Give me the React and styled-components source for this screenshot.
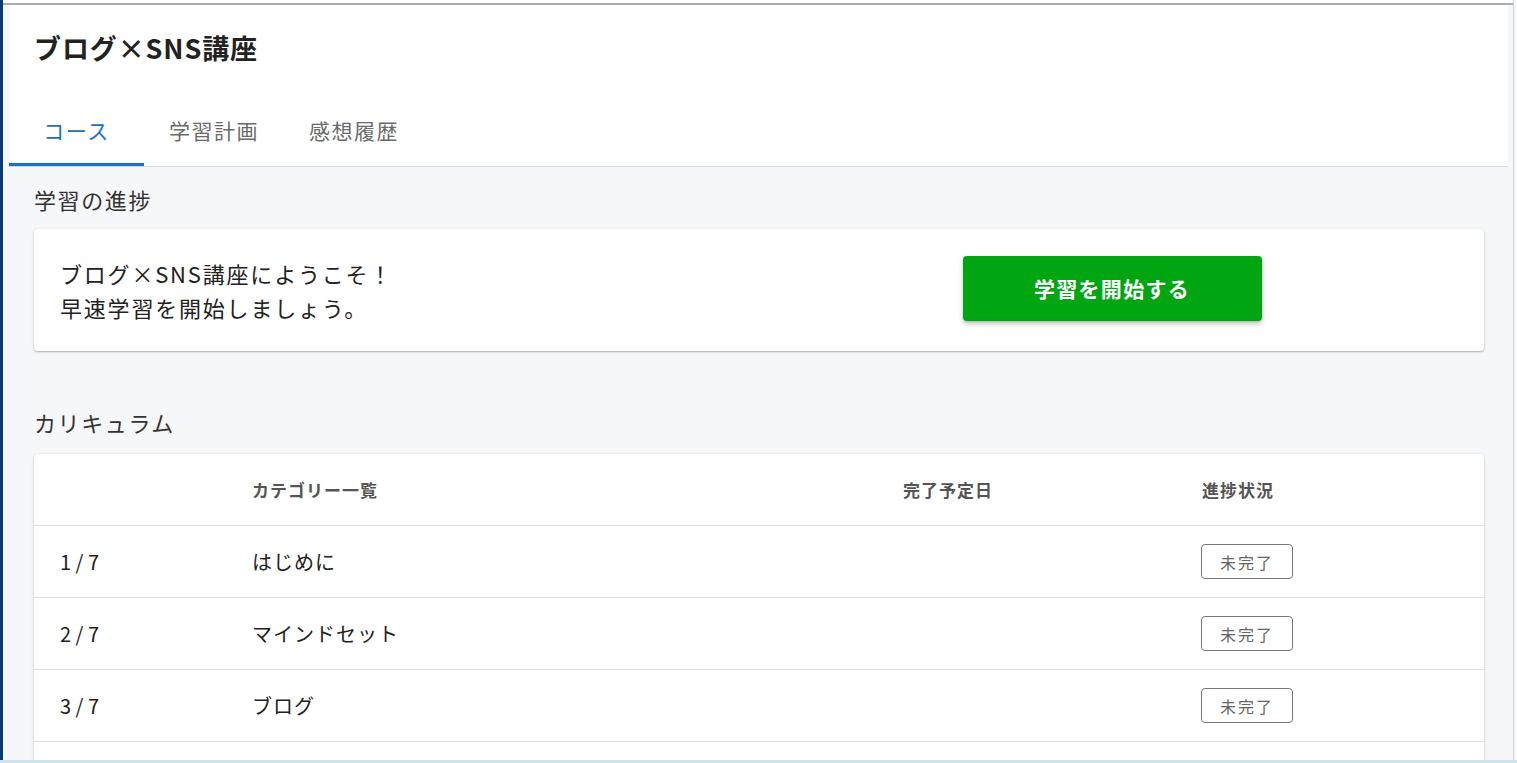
import React from "react";
import styled, { createGlobalStyle } from "styled-components";

const Global = createGlobalStyle`
  html, body { margin: 0; padding: 0; height: 100%; overflow: hidden; }
  body {
    background: #f6f7f9;
    font-family: "Noto Sans CJK JP", "Noto Sans", sans-serif;
    color: #222;
  }
  * { box-sizing: border-box; }
`;

const Shell = styled.div`
  display: flex;
  height: 100vh;
  overflow: hidden;
  background: #f6f7f9;
`;

const SideBar = styled.div`
  width: 3px;
  flex: none;
  background: #0b3b78;
`;

const Main = styled.div`
  flex: 1;
  min-width: 0;
  display: flex;
  flex-direction: column;
`;

const TopStrip = styled.div`
  height: 5px;
  flex: none;
  background: #fff;
  border-bottom: 2px solid #adadad;
`;

const RightRail = styled.div`
  width: 4px;
  flex: none;
  background: #f6f7f9;
  border-left: 1px solid #cfcfcf;
`;

const HeaderPanel = styled.header`
  margin: 0 5px 0 6px;
  background: #fff;
  border-bottom: 1px solid #d6d6d6;
`;

const Title = styled.h1`
  margin: 0;
  padding: 23px 25px 29px;
  font-size: 27px;
  line-height: 40px;
  font-weight: 700;
  letter-spacing: 0.9px;
  color: #222;
`;

const Tabs = styled.nav`
  display: flex;
`;

const Tab = styled.div`
  min-width: 135px;
  height: 69px;
  padding: 0 25px;
  display: flex;
  align-items: center;
  justify-content: center;
  font-size: 21px;
  letter-spacing: 1.5px;
  color: ${(p) => (p.$active ? "#1e6fc8" : "#6a6a6a")};
  border-bottom: 3px solid ${(p) => (p.$active ? "#1e6fc8" : "transparent")};
`;

const Content = styled.main`
  padding: 0 29px 0 31px;
`;

const SectionTitle = styled.h2`
  margin: ${(p) => p.$top}px 0 ${(p) => p.$bottom}px;
  font-size: 22px;
  line-height: 30px;
  font-weight: 400;
  letter-spacing: 1.6px;
  color: #333;
`;

const Card = styled.section`
  background: #fff;
  border-radius: 4px;
  box-shadow: 0 1px 3px rgba(0, 0, 0, 0.22), 0 1px 1px rgba(0, 0, 0, 0.1);
`;

const WelcomeCard = styled(Card)`
  min-height: 122px;
  display: grid;
  grid-template-columns: 1fr 1fr;
  align-items: center;
  padding: 0 24px 0 26px;
`;

const WelcomeText = styled.p`
  margin: 0;
  font-size: 22px;
  line-height: 34px;
  letter-spacing: 1.8px;
  color: #222;
`;

const StartButton = styled.button`
  justify-self: center;
  margin: 0 0 4px 4px;
  width: 299px;
  height: 65px;
  border: none;
  border-radius: 4px;
  background: #00a612;
  color: #fff;
  font-family: inherit;
  font-size: 21px;
  font-weight: 700;
  letter-spacing: 1.3px;
  box-shadow: 0 3px 5px rgba(0, 0, 0, 0.22), 0 1px 2px rgba(0, 0, 0, 0.12);
  cursor: pointer;
`;

const TableCard = styled(Card)`
  overflow: hidden;
`;

const Row = styled.div`
  display: grid;
  grid-template-columns: 192px 651px 299px 1fr;
  align-items: center;
  padding-left: 26px;
  height: 72px;
  border-bottom: 1px solid #e2e2e2;
`;

const HeadCell = styled.div`
  font-size: 17px;
  font-weight: 700;
  letter-spacing: 1px;
  color: #555;
`;

const Cell = styled.div`
  font-size: 20px;
  letter-spacing: ${(p) => (p.$num ? 0 : 1)}px;
  color: #222;
`;

const Badge = styled.span`
  display: inline-flex;
  align-items: center;
  justify-content: center;
  width: 92px;
  height: 35px;
  margin-left: -1px;
  border: 1px solid #777;
  border-radius: 4px;
  font-size: 16px;
  letter-spacing: 2px;
  color: #666;
`;

const BottomLine = styled.div`
  position: fixed;
  left: 0;
  right: 0;
  bottom: 0;
  height: 3px;
  background: #cfe4ea;
`;

const rows = [
  { no: "1 / 7", name: "はじめに" },
  { no: "2 / 7", name: "マインドセット" },
  { no: "3 / 7", name: "ブログ" },
  { no: "4 / 7", name: "SNS" },
];

export default function App() {
  return (
    <>
      <Global />
      <Shell>
        <SideBar />
        <Main>
          <TopStrip />
          <HeaderPanel>
            <Title>ブログ×SNS講座</Title>
            <Tabs>
              <Tab $active>コース</Tab>
              <Tab>学習計画</Tab>
              <Tab>感想履歴</Tab>
            </Tabs>
          </HeaderPanel>
          <Content>
            <SectionTitle $top={17} $bottom={15}>学習の進捗</SectionTitle>
            <WelcomeCard>
              <WelcomeText>
                ブログ×SNS講座にようこそ！
                <br />
                早速学習を開始しましょう。
              </WelcomeText>
              <StartButton>学習を開始する</StartButton>
            </WelcomeCard>
            <SectionTitle $top={56} $bottom={17}>カリキュラム</SectionTitle>
            <TableCard>
              <Row>
                <HeadCell />
                <HeadCell>カテゴリー一覧</HeadCell>
                <HeadCell>完了予定日</HeadCell>
                <HeadCell>進捗状況</HeadCell>
              </Row>
              {rows.map((r) => (
                <Row key={r.no}>
                  <Cell $num>{r.no}</Cell>
                  <Cell>{r.name}</Cell>
                  <Cell />
                  <Cell>
                    <Badge>未完了</Badge>
                  </Cell>
                </Row>
              ))}
            </TableCard>
          </Content>
        </Main>
        <RightRail />
      </Shell>
      <BottomLine />
    </>
  );
}
